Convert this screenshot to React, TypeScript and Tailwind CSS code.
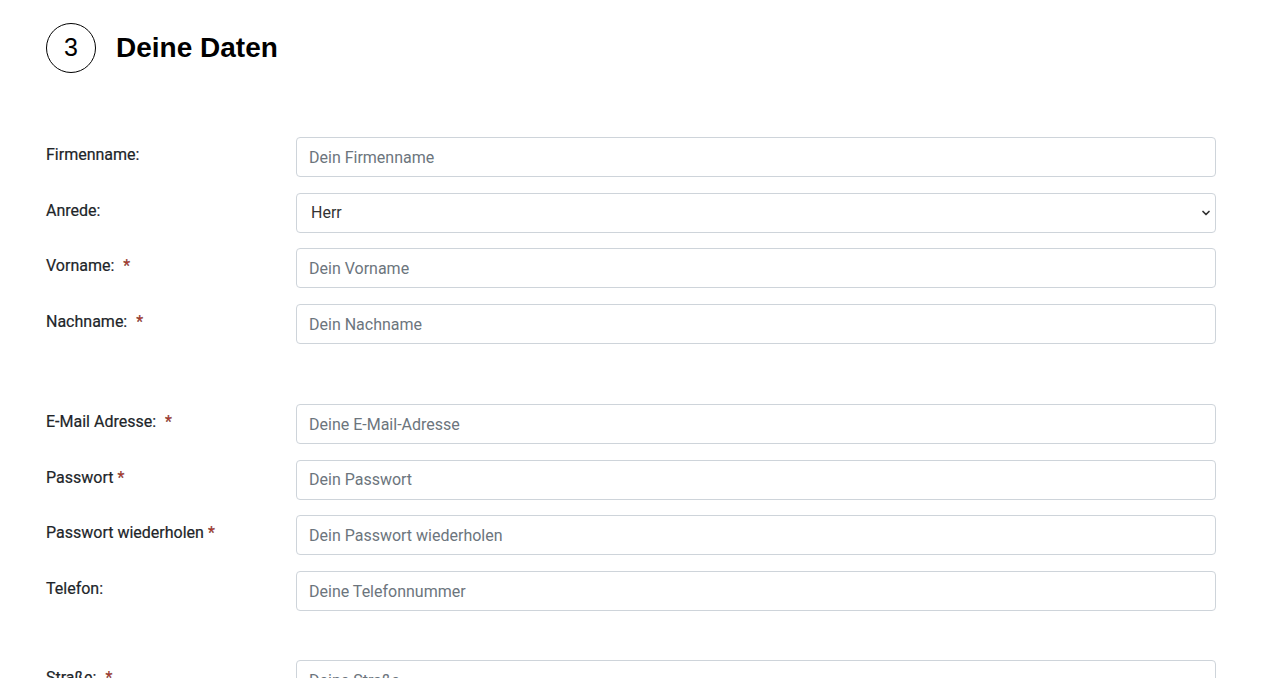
import { ChevronDown } from "lucide-react";

type Field = {
  label: string;
  placeholder?: string;
  required?: boolean;
  wide?: boolean;
  select?: string[];
};

const groups: Field[][] = [
  [
    { label: "Firmenname:", placeholder: "Dein Firmenname" },
    { label: "Anrede:", select: ["Herr", "Frau", "Divers"] },
    { label: "Vorname:", placeholder: "Dein Vorname", required: true, wide: true },
    { label: "Nachname:", placeholder: "Dein Nachname", required: true, wide: true },
  ],
  [
    { label: "E-Mail Adresse:", placeholder: "Deine E-Mail-Adresse", required: true, wide: true },
    { label: "Passwort", placeholder: "Dein Passwort", required: true },
    { label: "Passwort wiederholen", placeholder: "Dein Passwort wiederholen", required: true },
    { label: "Telefon:", placeholder: "Deine Telefonnummer" },
  ],
  [{ label: "Straße:", placeholder: "Deine Straße", required: true, wide: true }],
];

function Row({ field }: { field: Field }) {
  return (
    <div className="mb-[15.7px] flex items-start">
      <label className="w-[250px] shrink-0 pt-[6px] text-base leading-6 text-[#212529] [-webkit-text-stroke:0.2px_#212529]">
        {field.label}
        {field.required ? (
          <span className={field.wide ? "ml-[9px] text-[#c0392b]" : "ml-[4px] text-[#c0392b]"}>*</span>
        ) : null}
      </label>
      {field.select ? (
        <div className="relative w-[920px]">
          <select
            defaultValue={field.select[0]}
            className="h-[40px] w-full appearance-none rounded-[4px] border border-[#ced4da] bg-white px-[14px] text-base text-[#333] outline-none"
          >
            {field.select.map((o) => (
              <option key={o}>{o}</option>
            ))}
          </select>
          <ChevronDown
            strokeWidth={3.5}
            className="pointer-events-none absolute right-[4px] top-[14px] h-[12px] w-[12px] text-[#333]"
          />
        </div>
      ) : (
        <input
          type="text"
          placeholder={field.placeholder}
          className="h-[40px] w-[920px] rounded-[4px] border border-[#ced4da] bg-white px-3 text-base text-[#333] outline-none placeholder:text-[#6c757d]"
        />
      )}
    </div>
  );
}

export default function App() {
  return (
    <div className="min-h-screen bg-white pl-[46px] pt-[23px]" style={{ fontFamily: "Roboto, 'Liberation Sans', sans-serif" }}>
      <div className="flex items-center gap-[20px]" style={{ fontFamily: "'Liberation Sans', Arial, sans-serif" }}>
        <div className="grid h-[50px] w-[50px] place-items-center rounded-full border border-black text-[25px] text-black">
          3
        </div>
        <h2 className="text-[28px] font-bold text-black">Deine Daten</h2>
      </div>

      <div className="mt-[64px]">
        <div>
          {groups[0].map((f) => (
            <Row key={f.label} field={f} />
          ))}
        </div>
        <div className="mt-[60px]">
          {groups[1].map((f) => (
            <Row key={f.label} field={f} />
          ))}
        </div>
        <div className="mt-[49px]">
          {groups[2].map((f) => (
            <Row key={f.label} field={f} />
          ))}
        </div>
      </div>
    </div>
  );
}
